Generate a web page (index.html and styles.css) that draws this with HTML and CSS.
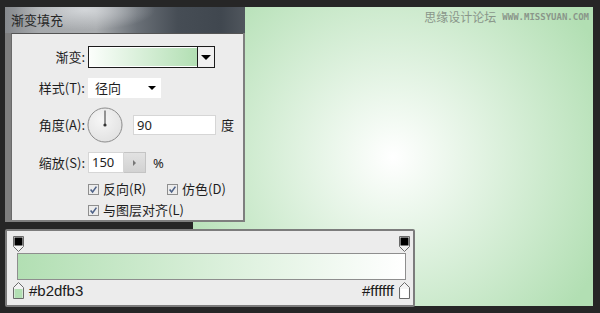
FILE: index.html
```html
<!DOCTYPE html>
<html lang="zh">
<head>
<meta charset="utf-8">
<title>渐变填充</title>
<link rel="stylesheet" href="styles.css">
</head>
<body>
<div class="stage">
  <div class="canvas">
    <div class="watermark"><span class="wm-cn">思缘设计论坛</span><span class="wm-url">WWW.MISSYUAN.COM</span></div>
  </div>

  <div class="dialog">
    <div class="titlebar">渐变填充</div>
    <div class="dlg-body">
      <div class="row r1">
        <span class="lbl">渐变:</span>
        <div class="grad-pick"><div class="swatch"></div><div class="pick-btn"><span class="tri-big"></span></div></div>
      </div>
      <div class="row r2">
        <span class="lbl">样式(T):</span>
        <div class="select"><span>径向</span><span class="tri-small"></span></div>
      </div>
      <div class="row r3">
        <span class="lbl">角度(A):</span>
        <svg class="dial" width="36" height="36" viewBox="0 0 36 36">
          <defs><radialGradient id="dg" cx="40%" cy="35%" r="75%"><stop offset="0" stop-color="#f6f6f6"/><stop offset="1" stop-color="#e0e0e0"/></radialGradient></defs>
          <circle cx="18" cy="18" r="17" fill="url(#dg)" stroke="#8c8c8c"/>
          <line x1="18" y1="3.5" x2="18" y2="18" stroke="#555" stroke-width="1.2"/>
          <circle cx="18" cy="18" r="1.6" fill="#333"/>
        </svg>
        <div class="input angle">90</div>
        <span class="unit">度</span>
      </div>
      <div class="row r4">
        <span class="lbl">缩放(S):</span>
        <div class="input scale">150</div>
        <div class="spin"><span class="tri-right"></span></div>
        <span class="pct">%</span>
      </div>
      <div class="row r5">
        <span class="lbl"></span>
        <svg class="cb" width="11" height="11" viewBox="0 0 11 11"><rect x="0.5" y="0.5" width="10" height="10" fill="#ececec" stroke="#8e8e8e"/><path d="M2.6 5.4L4.6 8L8.4 2.6" fill="none" stroke="#4e6288" stroke-width="1.6"/></svg>
        <span class="cb-text">反向(R)</span>
        <svg class="cb cb2" width="11" height="11" viewBox="0 0 11 11"><rect x="0.5" y="0.5" width="10" height="10" fill="#ececec" stroke="#8e8e8e"/><path d="M2.6 5.4L4.6 8L8.4 2.6" fill="none" stroke="#4e6288" stroke-width="1.6"/></svg>
        <span class="cb-text">仿色(D)</span>
      </div>
      <div class="row r6">
        <span class="lbl"></span>
        <svg class="cb" width="11" height="11" viewBox="0 0 11 11"><rect x="0.5" y="0.5" width="10" height="10" fill="#ececec" stroke="#8e8e8e"/><path d="M2.6 5.4L4.6 8L8.4 2.6" fill="none" stroke="#4e6288" stroke-width="1.6"/></svg>
        <span class="cb-text">与图层对齐(L)</span>
      </div>
    </div>
  </div>

  <div class="editor">
    <div class="stops-top">
      <svg width="11" height="16" viewBox="0 0 11 16"><path d="M0.5 0.5H10.5V10.5L5.5 15.5L0.5 10.5Z" fill="#f2f2f2" stroke="#6a6a6a"/><rect x="1.5" y="1.5" width="8" height="8" fill="#000"/></svg>
      <svg width="11" height="16" viewBox="0 0 11 16"><path d="M0.5 0.5H10.5V10.5L5.5 15.5L0.5 10.5Z" fill="#f2f2f2" stroke="#6a6a6a"/><rect x="1.5" y="1.5" width="8" height="8" fill="#000"/></svg>
    </div>
    <div class="grad-bar"></div>
    <div class="stops-bottom">
      <div class="stop-group">
        <svg width="11" height="17" viewBox="0 0 11 17"><path d="M5.5 0.5L10.5 5.5V16.5H0.5V5.5Z" fill="#f2f2f2" stroke="#6a6a6a"/><rect x="1.5" y="7" width="8" height="9" fill="#b2dfb3"/></svg>
        <span class="hex">#b2dfb3</span>
      </div>
      <div class="stop-group">
        <span class="hex">#ffffff</span>
        <svg width="11" height="17" viewBox="0 0 11 17"><path d="M5.5 0.5L10.5 5.5V16.5H0.5V5.5Z" fill="#f2f2f2" stroke="#6a6a6a"/><rect x="1.5" y="7" width="8" height="9" fill="#ffffff"/></svg>
      </div>
    </div>
  </div>
</div>
</body>
</html>
```

FILE: styles.css
```css
* { box-sizing: border-box; }
html, body { margin: 0; padding: 0; }
body {
  width: 600px;
  height: 313px;
  overflow: hidden;
  background: #262626;
  font-family: "Noto Sans CJK SC", "Noto Sans", sans-serif;
  color: #1e1e1e;
}
.stage {
  position: relative;
  width: 600px;
  height: 313px;
  padding: 7px 7px 7px 193px;
}
.canvas {
  width: 400px;
  height: 299px;
  background: radial-gradient(circle 232px at 200px 150px, #ffffff 0%, #b2dfb3 100%);
  display: flex;
  justify-content: flex-end;
  align-items: flex-start;
  padding: 2px 4px 0 0;
}
.watermark {
  display: flex;
  align-items: center;
  gap: 6px;
  color: #8a968a;
}
.wm-cn { font-size: 12px; line-height: 16px; }
.wm-url {
  font-family: "DejaVu Sans Mono", monospace;
  font-size: 9px;
  line-height: 12px;
  font-weight: bold;
}

/* dialog */
.dialog {
  position: absolute;
  left: 5px;
  top: 7px;
  width: 240px;
  height: 215px;
  background: #7e7e7e;
  display: flex;
  flex-direction: column;
}
.titlebar {
  height: 26px;
  flex: none;
  padding-left: 6px;
  font-size: 13px;
  line-height: 26px;
  color: #262626;
  background:
    radial-gradient(ellipse 70px 20px at 80px 3px, rgba(225,228,231,0.75), rgba(225,228,231,0)),
    linear-gradient(90deg, #86898d 0%, #a6a9ac 14%, #a9acaf 38%, #6a7077 55%, #464d55 72%, #40474f 90%, #50565d 100%);
}
.dlg-body {
  flex: 1;
  margin: 0 2px 2px 6px;
  background: #ececec;
  border-top: 1px solid #545454;
  border-left: 1px solid #6a6a6a;
  padding-top: 12px;
  display: flex;
  flex-direction: column;
}
.row {
  display: flex;
  align-items: center;
  font-size: 13px;
  line-height: 16px;
}
.lbl {
  width: 73px;
  margin-right: 3px;
  text-align: right;
  flex: none;
}
.r1 { height: 22px; }
.r2 { height: 20px; margin-top: 10px; }
.r3 { height: 36px; margin-top: 9px; }
.r4 { height: 21px; margin-top: 9px; }
.r5 { height: 14px; margin-top: 9px; }
.r6 { height: 14px; margin-top: 7px; }

.grad-pick {
  width: 127px;
  height: 22px;
  border: 1px solid #1c1c1c;
  display: flex;
  background: #f0f0f0;
}
.swatch {
  width: 108px;
  border: 1px solid #ffffff;
  border-right: none;
  background: linear-gradient(90deg, #fbfefb 0%, #b2dfb3 100%);
}
.pick-btn {
  flex: 1;
  border-left: 1px solid #1c1c1c;
  display: flex;
  align-items: center;
  justify-content: center;
}
.tri-big {
  width: 0; height: 0;
  border-left: 5px solid transparent;
  border-right: 5px solid transparent;
  border-top: 5px solid #000;
}
.select {
  width: 73px;
  height: 20px;
  background: #ffffff;
  display: flex;
  align-items: center;
  justify-content: space-between;
  padding: 0 5px 0 7px;
}
.tri-small {
  width: 0; height: 0;
  border-left: 4px solid transparent;
  border-right: 4px solid transparent;
  border-top: 4px solid #000;
}
.dial { margin-left: -1px; flex: none; }
.input {
  height: 20px;
  background: #ffffff;
  border: 1px solid #d6d6d6;
  padding-left: 3px;
  line-height: 18px;
  font-family: "Noto Sans", sans-serif;
  font-size: 13px;
}
.angle { width: 83px; margin-left: 10px; }
.unit { margin-left: 5px; }
.scale { width: 36px; height: 21px; line-height: 19px; }
.spin {
  width: 22px;
  height: 21px;
  background: linear-gradient(#e2e2e2, #d2d2d2);
  border: 1px solid #c4c4c4;
  border-left: none;
  display: flex;
  align-items: center;
  justify-content: center;
}
.tri-right {
  width: 0; height: 0;
  border-top: 3px solid transparent;
  border-bottom: 3px solid transparent;
  border-left: 3px solid #777;
}
.pct { margin-left: 7px; font-family: "Noto Sans", sans-serif; }
.cb { flex: none; }
.cb-text { margin-left: 4px; }
.cb2 { margin-left: 21px; }

/* gradient editor */
.editor {
  position: absolute;
  left: 5px;
  top: 229px;
  width: 410px;
  height: 78px;
  background: #ececec;
  border: 2px solid #7c7c7c;
  border-radius: 2px;
  display: flex;
  flex-direction: column;
}
.stops-top {
  height: 22px;
  display: flex;
  justify-content: space-between;
  align-items: flex-start;
  padding: 5px 3px 0 6px;
}
.grad-bar {
  height: 27px;
  margin: 0 7px 0 10px;
  border: 1px solid #8e8e8e;
  background: linear-gradient(90deg, #b2dfb3 0%, #ffffff 100%);
}
.stops-bottom {
  flex: 1;
  display: flex;
  justify-content: space-between;
  align-items: flex-start;
  padding: 2px 3px 0 6px;
}
.stop-group {
  display: flex;
  align-items: flex-start;
  gap: 5px;
}
.hex {
  font-family: "Liberation Sans", Arial, sans-serif;
  font-size: 15px;
  line-height: 17px;
  color: #1a1a1a;
}
```
